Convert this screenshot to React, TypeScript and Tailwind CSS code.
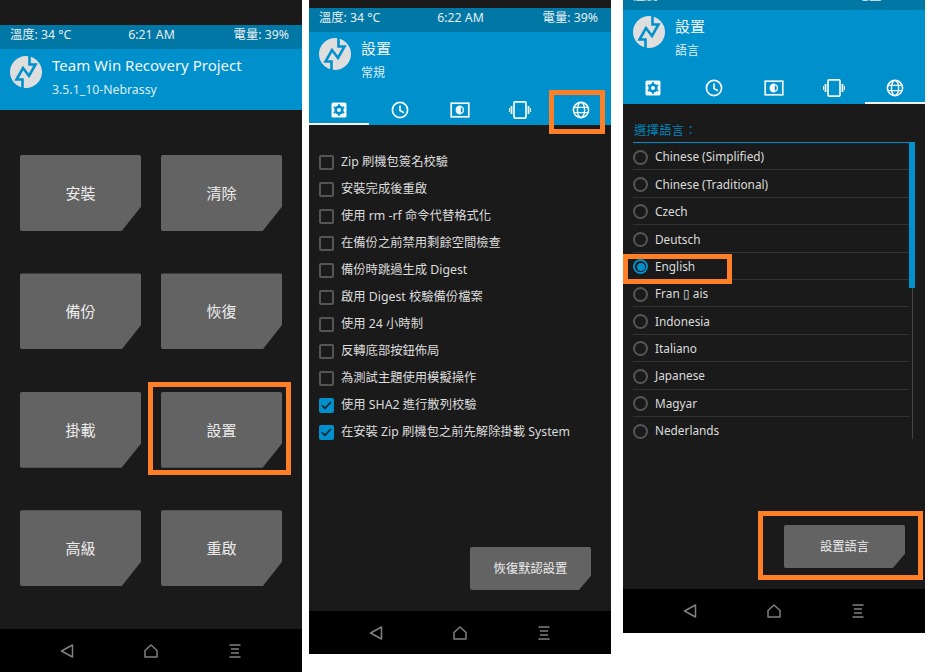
import React from "react";

const cjk = `font-['Noto_Sans','Noto_Sans_CJK_TC',sans-serif]`;

function Logo() {
  return (
    <svg width="32" height="32" viewBox="0 0 32 32" className="shrink-0">
      <circle cx="16" cy="16" r="16" fill="#dedede" />
      <path
        d="M12.5 33 V23.5 L6.5 23.5 L13 12 L19 20 L25.5 8.5 L19.5 8.5 V-1"
        fill="none"
        stroke="#0090cc"
        strokeWidth="2.6"
      />
    </svg>
  );
}

function Back() {
  return (
    <svg width="14" height="14" viewBox="0 0 14 14" fill="none" stroke="#808080" strokeWidth="1.5">
      <path d="M12.5 1 V13 L1.5 7 Z" strokeLinejoin="round" />
    </svg>
  );
}
function Home() {
  return (
    <svg width="14" height="14" viewBox="0 0 14 14" fill="none" stroke="#808080" strokeWidth="1.5">
      <path d="M7 1 L13 6.5 V13 H1 V6.5 Z" strokeLinejoin="round" />
    </svg>
  );
}
function Menu() {
  return (
    <svg width="14" height="14" viewBox="0 0 14 14" fill="none" stroke="#808080" strokeWidth="1.5">
      <path d="M1.5 1 H12.5 M3 5 H11 M3 9 H11 M1.5 13 H12.5" />
    </svg>
  );
}

function Nav({ h }: { h: string }) {
  return (
    <div className={`${h} shrink-0 bg-black flex items-center justify-center gap-[70px] pr-[1px]`}>
      <Back />
      <Home />
      <Menu />
    </div>
  );
}

function Status({ time, cls }: { time: string; cls: string }) {
  return (
    <div className={`${cls} shrink-0 bg-[#0077a4] flex items-center justify-between pl-[10px] pr-[13px] pb-[3px] text-[12.3px] text-[#e6eef2]`}>
      <span className="w-[94px]">溫度: 34 °C</span>
      <span>{time}</span>
      <span className="w-[90px] text-right">電量: 39%</span>
    </div>
  );
}

function TabIcons() {
  const s = { fill: "none", stroke: "#f4f8fa", strokeWidth: 1.7 };
  return [
    <svg key="g" width="18" height="18" viewBox="0 0 18 18">
      <rect x="1.5" y="1.5" width="15" height="15" rx="1.5" fill="#f4f8fa" />
      <circle cx="9" cy="9" r="4.6" fill="#0090cc" />
      <circle cx="9" cy="9" r="2" fill="#f4f8fa" />
      <path d="M9 3.2 V5 M9 13 V14.8 M3.9 6 L5.4 7 M12.6 11 L14.1 12 M3.9 12 L5.4 11 M12.6 7 L14.1 6" stroke="#0090cc" strokeWidth="2" />
    </svg>,
    <svg key="c" width="18" height="18" viewBox="0 0 18 18" {...s}>
      <circle cx="9" cy="9" r="7.6" />
      <path d="M9 4.5 V9.5 L13 11.8" />
    </svg>,
    <svg key="b" width="20" height="18" viewBox="0 0 20 18" {...s}>
      <rect x="1.2" y="2.2" width="17.6" height="13.6" />
      <circle cx="10" cy="9" r="3.4" strokeWidth="1.3" />
      <path d="M10 5.4 A3.6 3.6 0 0 0 10 12.6 Z" fill="#f4f8fa" />
    </svg>,
    <svg key="v" width="22" height="18" viewBox="0 0 22 18" {...s}>
      <rect x="5" y="0.8" width="12" height="16.4" rx="1.2" />
      <path d="M2.5 5 V13 M19.5 5 V13" strokeWidth="1.8" />
      <path d="M0.5 7 V11 M21.5 7 V11" strokeWidth="1" />
    </svg>,
    <svg key="w" width="18" height="18" viewBox="0 0 18 18" {...s}>
      <circle cx="9" cy="9" r="7.6" strokeWidth="1.6" />
      <ellipse cx="9" cy="9" rx="3.6" ry="7.6" strokeWidth="1.4" />
      <path d="M1.8 6.4 H16.2 M1.8 11.6 H16.2" strokeWidth="1.4" />
    </svg>,
  ];
}

function Tabs({ active, top }: { active: number; top: string }) {
  const icons = TabIcons();
  return (
    <div className="grid grid-cols-5 h-[36px]">
      {icons.map((ic, i) => (
        <div key={i} className={`flex items-center justify-center ${top} ${i === active ? "border-b-[2px] border-[#f0f0f0]" : "border-b-[2px] border-transparent"}`}>
          {ic}
        </div>
      ))}
    </div>
  );
}

function Cut({ label, className, big }: { label: string; className: string; big?: boolean }) {
  return (
    <div
      className={`${className} bg-[#636363] text-[#ececec] flex items-center justify-center rounded-[2px] ${
        big ? "text-[15px] [clip-path:polygon(0_0,100%_0,100%_68%,84%_100%,0_100%)]" : "text-[12.3px] pt-[2px] [clip-path:polygon(0_0,100%_0,100%_67%,90%_100%,0_100%)]"
      }`}
    >
      {label}
    </div>
  );
}

function Check({ label, on }: { label: string; on?: boolean }) {
  return (
    <div className="h-[27px] flex items-center gap-[7px] text-[12.3px] text-[#dcdcdc]">
      {on ? (
        <span className="w-[15px] h-[15px] rounded-[2px] bg-[#0090cc] flex items-center justify-center">
          <svg width="11" height="9" viewBox="0 0 11 9" fill="none" stroke="#10202a" strokeWidth="1.6">
            <path d="M0.8 4.2 L3.9 7.4 L10 1" />
          </svg>
        </span>
      ) : (
        <span className="w-[15px] h-[15px] rounded-[2px] border-2 border-[#555555]" />
      )}
      <span>{label}</span>
    </div>
  );
}

const checks = [
  "Zip 刷機包簽名校驗",
  "安裝完成後重啟",
  "使用 rm -rf 命令代替格式化",
  "在備份之前禁用剩餘空間檢查",
  "備份時跳過生成 Digest",
  "啟用 Digest 校驗備份檔案",
  "使用 24 小時制",
  "反轉底部按鈕佈局",
  "為測試主題使用模擬操作",
];

const langs = [
  "Chinese (Simplified)",
  "Chinese (Traditional)",
  "Czech",
  "Deutsch",
  "English",
  "Fran ▯ ais",
  "Indonesia",
  "Italiano",
  "Japanese",
  "Magyar",
  "Nederlands",
];

function Radio({ on }: { on?: boolean }) {
  return on ? (
    <span className="w-[15px] h-[15px] rounded-full border-2 border-[#0090cc] flex items-center justify-center">
      <span className="w-[8px] h-[8px] rounded-full bg-[#0090cc]" />
    </span>
  ) : (
    <span className="w-[15px] h-[15px] rounded-full border-2 border-[#555555]" />
  );
}

function Mark({ className }: { className: string }) {
  return <div className={`absolute border-[5px] border-[#ff7f27] pointer-events-none ${className}`} />;
}

export default function App() {
  return (
    <div className={`relative w-[929px] h-[672px] bg-white overflow-hidden flex items-start ${cjk}`}>
      {/* Left */}
      <div className="w-[302px] h-[672px] bg-[#1a1a1a] flex flex-col">
        <div className="h-[25px] shrink-0" />
        <Status time="6:21 AM" cls="h-[24px]" />
        <div className="h-[61px] shrink-0 bg-[#0090cc] flex items-start gap-[10px] pl-[10px] pt-[7px] text-[#f0f6f9]">
          <Logo />
          <div>
            <div className="text-[15px] leading-[20px] -mt-[1px]">Team Win Recovery Project</div>
            <div className="text-[12.3px] leading-[16px] mt-[7px] text-[#dfeef5]">3.5.1_10-Nebrassy</div>
          </div>
        </div>
        <div className="flex-1 grid grid-cols-[121px_121px] auto-rows-[76px] gap-x-[20px] gap-y-[42.4px] pl-[20px] pt-[45px]">
          {["安裝", "清除", "備份", "恢復", "掛載", "設置", "高級", "重啟"].map((t) => (
            <Cut key={t} label={t} className="w-[121px] h-[76px]" big />
          ))}
        </div>
        <Nav h="h-[43px]" />
      </div>

      {/* Middle */}
      <div className="w-[302px] h-[654px] ml-[7px] bg-[#1a1a1a] flex flex-col">
        <div className="h-[8px] shrink-0" />
        <Status time="6:22 AM" cls="h-[24px]" />
        <div className="h-[93px] shrink-0 bg-[#0090cc] text-[#f0f6f9] flex flex-col">
          <div className="flex items-start gap-[10px] pl-[10px] pt-[6px] h-[57px]">
            <Logo />
            <div>
              <div className="text-[15px] leading-[20px]">設置</div>
              <div className="text-[12px] leading-[16px] mt-[7px] text-[#dfeef5]">常規</div>
            </div>
          </div>
          <Tabs active={0} top="pt-[8px]" />
        </div>
        <div className="flex-1 flex flex-col pl-[10px] pt-[24px]">
          {checks.map((c) => (
            <Check key={c} label={c} />
          ))}
          <Check label="使用 SHA2 進行散列校驗" on />
          <Check label="在安裝 Zip 刷機包之前先解除掛載 System" on />
          <div className="mt-[101px] flex justify-end pr-[20px]">
            <Cut label="恢復默認設置" className="w-[121px] h-[43px]" />
          </div>
        </div>
        <Nav h="h-[43px]" />
      </div>

      {/* Right */}
      <div className="w-[302px] h-[633px] ml-[12px] bg-[#1a1a1a] flex flex-col">
        <div className="h-[10px] shrink-0 overflow-hidden flex flex-col justify-end">
          <Status time="6:22 AM" cls="h-[24px]" />
        </div>
        <div className="h-[94px] shrink-0 bg-[#0090cc] text-[#f0f6f9] flex flex-col">
          <div className="flex items-start gap-[10px] pl-[10px] pt-[6px] h-[58px]">
            <Logo />
            <div>
              <div className="text-[15px] leading-[20px]">設置</div>
              <div className="text-[12px] leading-[16px] mt-[7px] text-[#dfeef5]">語言</div>
            </div>
          </div>
          <Tabs active={4} top="pt-[6px]" />
        </div>
        <div className="flex-1 pl-[10px] pr-[10px] pt-[19px]">
          <div className="text-[12.3px] leading-[16px] text-[#0083b8] pl-[1px] tracking-[0.3px]">選擇語言：</div>
          <div className="mt-[3px] h-[297px] border-t border-[#0090cc] flex overflow-hidden">
            <div className="flex-1">
              {langs.map((l) => (
                <div key={l} className="h-[27.4px] pt-[2px] border-b border-[#333333] flex items-center gap-[7px] text-[11.8px] text-[#dcdcdc]">
                  <Radio on={l === "English"} />
                  <span>{l}</span>
                </div>
              ))}
            </div>
            <div className="w-[6px] flex flex-col items-center">
              <div className="w-[6px] h-[145px] bg-[#0090cc]" />
              <div className="w-[1px] flex-1 bg-[#444444]" />
            </div>
          </div>
          <div className="mt-[86px] flex justify-end pr-[10px]">
            <Cut label="設置語言" className="w-[121px] h-[43px]" />
          </div>
        </div>
        <Nav h="h-[44px]" />
      </div>

      <Mark className="left-[148px] top-[382px] w-[143px] h-[93px]" />
      <Mark className="left-[549px] top-[90px] w-[56px] h-[44px]" />
      <Mark className="left-[623px] top-[254px] w-[109px] h-[30px]" />
      <Mark className="left-[758px] top-[511px] w-[165px] h-[69px]" />
    </div>
  );
}
